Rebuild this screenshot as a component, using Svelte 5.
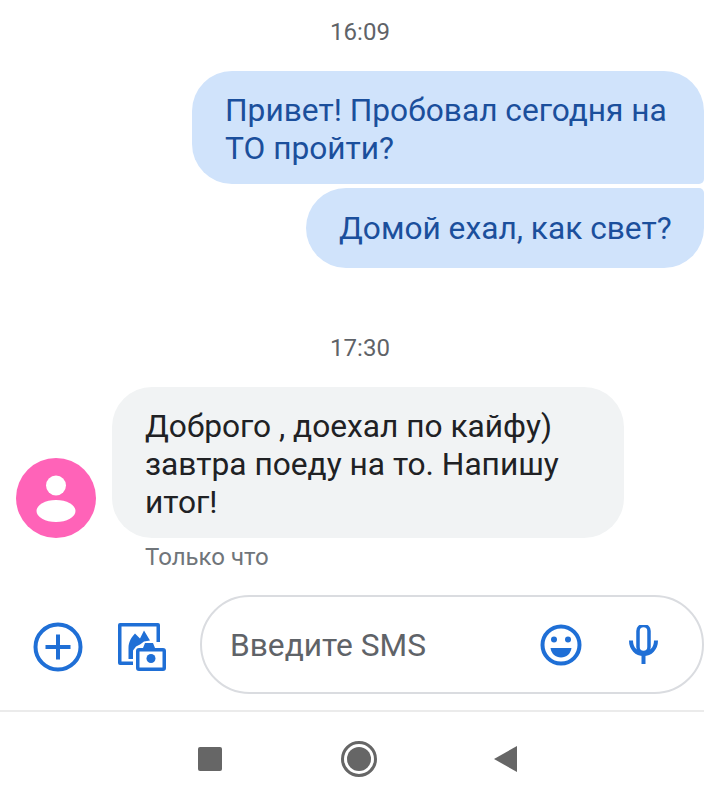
<script lang="ts">
	type Group = { time: string; messages: string[] };
	const sent: Group = {
		time: "16:09",
		messages: ["Привет! Пробовал сегодня на ТО пройти?", "Домой ехал, как свет?"],
	};
</script>

<main>
	<p class="time first">{sent.time}</p>
	<div class="bubble out top">{sent.messages[0]}</div>
	<div class="bubble out bottom">{sent.messages[1]}</div>

	<p class="time second">17:30</p>
	<div class="incoming">
		<div class="avatar">
			<svg width="80" height="80" viewBox="0 0 80 80">
				<circle cx="40" cy="40" r="40" fill="#ff63b8" />
				<circle cx="40" cy="27.5" r="10" fill="#fff" />
				<ellipse cx="40" cy="53" rx="19.5" ry="11" fill="#fff" />
			</svg>
		</div>
		<div class="bubble in">Доброго , доехал по кайфу) завтра поеду на то. Напишу итог!</div>
	</div>
	<p class="status">Только что</p>

	<div class="composer">
		<button type="button" aria-label="Добавить" class="plus">
			<svg width="50" height="50" viewBox="0 0 50 50" fill="none" stroke="#1f6fd6" stroke-width="4">
				<circle cx="25" cy="25" r="22.5" />
				<path d="M25 12.5v25M12.5 25h25" />
			</svg>
		</button>
		<button type="button" aria-label="Галерея" class="gallery">
			<svg width="48" height="48" viewBox="0 0 48 48" fill="#1f6fd6">
				<path d="M2 0h38a2 2 0 0 1 2 2v17h-3.5V3.500h-35v35H15V42H2a2 2 0 0 1-2-2V2a2 2 0 0 1 2-2z" />
				<path d="M10.500 36V25c0-6 3-11 6.500-14.500l5 5 4-8 6 10-6 1-4 3-4 2-3 4v8.500z" />
				<path d="M25 25l2-5h8l2 5h8a3 3 0 0 1 3 3v17a3 3 0 0 1-3 3H21a3 3 0 0 1-3-3V28a3 3 0 0 1 3-3zm-3.500 3.500v16h23v-16z" />
				<circle cx="33" cy="35.500" r="4.500" />
			</svg>
		</button>
		<div class="field">
			<span class="placeholder">Введите SMS</span>
			<svg class="smile" width="42" height="42" viewBox="0 0 42 42">
				<circle cx="21" cy="21" r="18.500" fill="none" stroke="#1f6fd6" stroke-width="4" />
				<circle cx="14" cy="15.500" r="3" fill="#1f6fd6" />
				<circle cx="28" cy="15.500" r="3" fill="#1f6fd6" />
				<path d="M10.500 24h21c-1 6-5 9.500-10.500 9.500S11.500 30 10.500 24z" fill="#1f6fd6" />
			</svg>
			<svg class="mic" width="30" height="40" viewBox="0 0 30 40">
				<rect x="9" y="0.500" width="11" height="27" rx="5.500" fill="none" stroke="#1f6fd6" stroke-width="3.500" />
				<path d="M2 15.500c0 8 5.500 13.500 12.500 13.500S27 23.500 27 15.500" fill="none" stroke="#1f6fd6" stroke-width="4" />
				<path d="M12.500 28h4v11h-4z" fill="#1f6fd6" />
			</svg>
		</div>
	</div>

	<nav>
		<span class="square"></span>
		<span class="home"><span></span></span>
		<svg width="24" height="26" viewBox="0 0 24 26"><path d="M23 0v26L0 13z" fill="#666" /></svg>
	</nav>
</main>

<style>
	:global(body) {
		background: #fff;
	}

	main {
		width: 704px;
		height: 807px;
		overflow: hidden;
		display: flex;
		flex-direction: column;
		font-family: Roboto, "Liberation Sans", sans-serif;
	}

	.time {
		margin: 0;
		text-align: center;
		font-size: 24px;
		line-height: 28px;
		color: #5f6368;
		padding-left: 16px;
	}
	.first {
		margin-top: 18px;
		margin-bottom: 25px;
	}
	.second {
		margin-top: 66px;
		margin-bottom: 25px;
	}

	.bubble {
		box-sizing: border-box;
		font-size: 31.700px;
		line-height: 38px;
		padding: 21px 33px 0;
	}

	.out {
		align-self: flex-end;
		background: #d0e3fb;
		color: #1b4f9c;
	}
	.top {
		width: 512px;
		height: 113px;
		border-radius: 40px 40px 5px 40px;
	}
	.bottom {
		width: 398px;
		height: 80px;
		margin-top: 4px;
		border-radius: 40px 5px 40px 40px;
		padding-top: 22px;
		padding-right: 20px;
	}

	.incoming {
		display: flex;
		align-items: flex-end;
		gap: 16px;
		padding-left: 16px;
	}
	.avatar {
		height: 80px;
	}
	.avatar svg {
		display: block;
	}
	.in {
		width: 512px;
		height: 151px;
		background: #f1f3f4;
		color: #202124;
		border-radius: 40px;
		padding-top: 21px;
	}

	.status {
		margin: 5px 0 0 145px;
		font-size: 24px;
		line-height: 28px;
		color: #70757a;
	}

	.composer {
		display: flex;
		align-items: flex-start;
		margin-top: 24px;
		height: 99px;
		padding-left: 33px;
	}
	.composer button {
		padding: 0;
		border: 0;
		background: none;
		margin-top: 28px;
		line-height: 0;
	}
	.plus {
		width: 85px;
		text-align: left;
	}
	.plus svg {
		margin-top: -1px;
	}
	.gallery {
		width: 82px;
		text-align: left;
	}

	.field {
		box-sizing: border-box;
		flex: none;
		width: 504px;
		height: 99px;
		border: 2px solid #dadce0;
		border-radius: 50px;
		display: flex;
		align-items: center;
		padding-left: 28px;
	}
	.placeholder {
		font-size: 31.700px;
		color: #5f6368;
		width: 310px;
		padding-top: 2px;
	}
	.mic {
		margin-left: 47px;
	}

	nav {
		margin-top: 16px;
		border-top: 2px solid #ebebeb;
		display: flex;
		align-items: center;
		padding: 34px 0 0 198px;
		height: 26px;
	}
	.square {
		width: 24px;
		height: 24px;
		border-radius: 2px;
		background: #666;
		margin-right: 119px;
	}
	.home {
		box-sizing: border-box;
		width: 36px;
		height: 36px;
		border: 3px solid #666;
		border-radius: 50%;
		padding: 3px;
		margin-right: 117px;
	}
	.home span {
		display: block;
		width: 24px;
		height: 24px;
		border-radius: 50%;
		background: #666;
	}
</style>
